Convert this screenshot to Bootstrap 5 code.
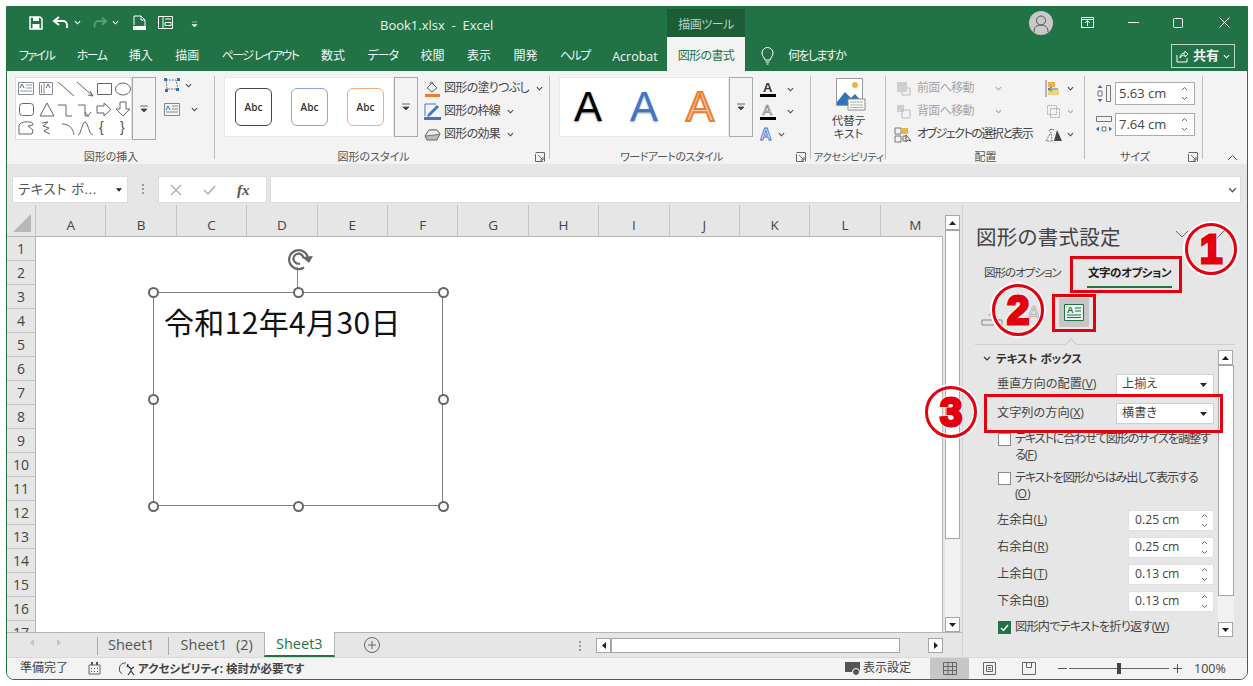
<!DOCTYPE html>
<html lang="ja"><head><meta charset="utf-8"><title>Book1.xlsx - Excel</title>
<link rel="stylesheet" href="https://cdn.jsdelivr.net/npm/bootstrap@5.3.0/dist/css/bootstrap.min.css">
<style>
html,body{background:#fff;margin:0;height:686px;overflow:hidden}
body{font-family:"Open Sans","Noto Sans CJK JP",sans-serif;font-feature-settings:"palt";color:#444;font-size:12px;line-height:1.2}
svg{display:block;flex:none}
.xw{position:relative;margin:6px 0 0 6px;width:1242px;height:674px;border:1px solid #217346;border-radius:0 0 8px 8px;overflow:hidden;background:#e6e6e6}
.tbar{height:31px;background:#217346;color:#fff;position:relative}
.qa{width:670px;padding-left:21px}
.m4x{margin-left:4px}.m11{margin-left:11px}.m12{margin-left:12px}.m14{margin-left:14px}.m18{margin-left:18px}
.ttl{position:absolute;left:373px;top:11px;font-size:13px;color:#eaf2ed;white-space:pre}
.ctx{position:absolute;left:660px;top:2px;width:78px;height:29px;background:#1c5d38;color:#b9d3c5;font-size:12px;text-align:center;line-height:32px;letter-spacing:-.5px}
.wc{position:absolute;left:1022px;top:0;height:31px}
.avatar{width:24px;height:24px;border-radius:50%;background:#c9c9c9;margin-right:28px}
.wgap1{margin-left:34px}.wgap2{margin-left:36px}
.tabs{height:33px;background:#217346;color:#f2f7f4;font-size:12px;position:relative;padding:3px 0 0 12px;gap:22.5px}
.tabs>span{white-space:nowrap}
.tabs>.kn{letter-spacing:-1.6px}
.tabs>.kd{letter-spacing:-1px}
.tabs>.kl{font-size:12.5px}
.tact{position:absolute;left:660px;top:-1px;width:78px;height:34px;background:#f3f3f3;color:#217346;text-align:center;line-height:38px;letter-spacing:-.6px}
.tell{position:absolute;left:754px;top:9px;gap:14px}
.tell span{letter-spacing:-1.6px}
.share{position:absolute;left:1164px;top:6px;width:64px;height:24px;border:1px solid #bcd6c7;font-weight:700;font-size:13px;gap:4px}
.rib{height:93px;background:#f3f3f3;position:relative}
.grp{position:relative;height:93px;border-right:0}
.grp::after{content:"";position:absolute;right:0;top:5px;bottom:5px;width:1px;background:#bdbdbd}
.g1{width:208px}.g2{width:335px}.g3{width:261px}.g4{width:75px}.g5{width:199px}.g6{width:118px}
.gbody{height:79px;padding-top:6px}
.glab{height:14px;text-align:center;font-size:11px;line-height:14px;white-space:nowrap;color:#555;position:relative}
.glab.lau{padding-right:18px}
.gt{letter-spacing:-.5px}
.launch{position:absolute;right:5px;top:2px}
.gal{background:#fff;border:1px solid #e9e9e9;height:60px}
.scr{width:24px;height:60px;border:1px solid #a9a9a9;border-left-color:#a9a9a9;background:#f3f3f3}
.cmds{font-size:12px;white-space:nowrap}
.cmd{height:23px;gap:3px}
.cmd span{letter-spacing:-.7px}
.cobj span{letter-spacing:-1.5px}
.off{color:#a6a6a6}
.abc{width:37px;height:38px;border-radius:6px;border:1.5px solid #444;font-size:10px;font-weight:600;background:#fff;color:#333}
.ab2{border-color:#8aa6d8}.ab3{border-color:#efac80}
.wa{font-family:"Liberation Sans",sans-serif;font-size:42px;line-height:1;width:56px;text-align:center}
.wa1{color:#000;text-shadow:0 1px 2px #888}
.wa2{color:#4472c4;text-shadow:0 1px 2px #9ab}
.wa3{color:#f9c9a8;-webkit-text-stroke:2px #ed7d31}
.sz{width:80px;height:23px;background:#fff;border:1px solid #ababab;font-size:13px;padding:0 6px 0 3px}
.fbar{height:41px;background:#e6e6e6;padding:12px 6px 2px 5px}
.fb{height:27px;background:#fff;border:1px solid #dcdcdc}
.nm{width:116px;font-size:13.5px;letter-spacing:.5px;padding:0 5px;color:#555}
.main{height:452px}
.lft{width:955px}
.top{height:427px}
.grd{width:936px}
.hdr{height:32px;background:#e6e6e6;border-bottom:1px solid #b4b4b4;overflow:hidden}
.crn{width:29px;flex:none;border-right:1px solid #c4c4c4}
.cc{flex:0 0 70.4px;border-right:1px solid #c4c4c4;text-align:center;font-size:13.5px;padding-top:12px;height:31px;color:#444}
.rows{width:29px;flex:none;background:#e6e6e6;border-right:1px solid #b4b4b4;overflow:hidden;height:395px}
.rn{height:24px;border-bottom:1px solid #c4c4c4;text-align:center;font-size:14px;line-height:23px;color:#444}
.cells{position:relative;background:#fff;flex:1;border-right:1px solid #b4b4b4}
.tbx{position:absolute;left:117px;top:55px;width:290px;height:214px;border:1.5px solid #7f7f7f;font-size:30px;padding:7px 0 0 10px;font-family:"Noto Sans CJK JP",sans-serif;font-feature-settings:normal;color:#111;line-height:42px;white-space:nowrap;letter-spacing:.35px}
.hd{position:absolute;width:11px;height:11px;border:2px solid #666;border-radius:50%;background:#fff}
.stem{position:absolute;left:261px;top:30px;width:1px;height:25px;background:#888}
.rot{position:absolute;left:250px;top:11px}
.vsb{width:19px;padding:10px 2px 0 2px;background:#e6e6e6}
.arb{width:15px;height:15px;background:#fff;border:1px solid #a6a6a6}
.th{background:#fff;border:1px solid #a6a6a6}
.vth{height:309px}.vtr{height:78px;background:#f1f1f1}
.stabs{height:25px;background:#e6e6e6;position:relative;border-top:1px solid #b4b4b4;font-size:14.5px}
.navs{width:90px;padding-left:23px;gap:21px;height:19px}
.sep{width:1px;height:18px;background:#aaa;flex:none}
.st{padding:0 13px 0 10px;height:23px;line-height:23px;white-space:nowrap;color:#555}
.st2{padding:0 11px 0 12px;word-spacing:5px}
.sta{background:#fff;color:#217346;border-bottom:2px solid #217346;border-left:1px solid #b4b4b4;border-right:1px solid #b4b4b4;padding:0 10px;width:71px;text-align:center;margin-top:-1px;height:25px}
.plus{margin-left:29px}
.dots{margin-left:199px}
.hs{position:absolute;left:589px;top:5px;width:347px;height:15px;gap:0}
.htr{width:289px;height:15px;background:#fff;border:1px solid #a6a6a6}
.pane{flex:1;background:#e6e6e6;border-left:1px solid #d0d0d0;position:relative;padding-left:12px}
.pchv{left:212px;top:25px}.pclose{left:253px;top:24px}.rcol{left:1220px;top:83px}
.ptl{margin-top:18px;height:28px;font-size:20.5px;line-height:28px;white-space:nowrap;color:#444;letter-spacing:.3px;padding-left:1px}
.pt{height:30px;margin-top:7px;padding-left:9px;font-size:11.5px;white-space:nowrap}
.pt1{width:103px;line-height:29px;letter-spacing:-1px}
.pt2{width:85px;text-align:center;font-weight:700;line-height:29px;border-bottom:2.5px solid #217346;color:#222;margin-left:0;letter-spacing:-.4px}
.pic{height:50px;padding-left:6px;padding-top:10px}
.pico{margin-left:16px;width:30px;height:29px;background:#c6c6c6}
.pdiv{position:relative;height:1px;background:#cdcdcd;width:260px;margin-top:6px}
.pdiv::after{content:"";position:absolute;left:92px;top:-4px;width:8px;height:8px;background:#e6e6e6;border-left:1px solid #cdcdcd;border-top:1px solid #cdcdcd;transform:rotate(45deg)}
.pbd{margin-top:5px}
.plist{width:243px;padding-left:22px;padding-right:4px;font-size:12.2px;color:#444}
.sh{height:17px;margin-left:-14px;gap:5px;font-weight:700;font-size:11.5px;color:#333}
.sel{width:98px;height:21px;background:#fff;border:1px solid #cfcfcf;padding:0 6px 0 5px;font-size:12.2px}
.spn{width:86px;height:21px;background:#fff;border:1px solid #e0e0e0;padding:0 5px 0 6px;font-size:12.2px}
.mt6{margin-top:6px}.mt7{margin-top:7px}.mt8{margin-top:8px}.mt9{margin-top:9px}
.ckb{width:13px;height:13px;background:#fff;border:1px solid #8a8a8a;flex:none;margin:2px 4px 0 1px}
.ckd{background:#217346;border-color:#217346}
.ckt{line-height:15.5px;letter-spacing:-1.2px;white-space:nowrap}
.ckt u{letter-spacing:0}
.ck3{letter-spacing:-.8px}
u{text-decoration-thickness:1px}
.psb{width:16px}
.ptv{height:231px}.ptr{height:26px;background:#f1f1f1}
.stt{height:22px;background:#f3f3f3;border-top:1px solid #dadada;font-size:12px;position:relative;color:#444}
.stt>div{position:absolute;top:0;height:21px}
.acc{font-weight:700;font-size:11.5px;gap:2px}
.vb{left:923px;width:39px;background:#c6c6c6}
.rbox{position:absolute;border:3px solid #e3000f;pointer-events:none}
.ring{position:absolute;width:52px;height:52px;border:3px solid #e3000f;border-radius:50%;box-shadow:0 0 0 2px #fff,inset 0 0 0 1px rgba(255,255,255,.8);font-family:"Liberation Sans",sans-serif;font-weight:700;font-size:40px;color:#e3000f;-webkit-text-stroke:3px #e3000f;text-shadow:0 0 4px #fff,0 0 4px #fff,0 0 4px #fff;text-align:center;line-height:46px;font-feature-settings:normal}
</style></head><body>
<svg width="0" height="0" class="position-absolute"><defs>
<symbol id="cv" viewBox="0 0 8 5"><path d="M1 1l3 3 3-3" fill="none" stroke="currentColor" stroke-width="1.2"/></symbol>
<symbol id="la" viewBox="0 0 10 10"><path d="M.5.5h9v9M.5 2v7.5H8M3 3l5 5M8 5v3H5" fill="none" stroke="#666"/></symbol>
<symbol id="more" viewBox="0 0 10 8"><path d="M1 1h8M2 4l3 3 3-3z" fill="#444" stroke="#444" stroke-width=".8"/></symbol>
<symbol id="up" viewBox="0 0 7 4"><path d="M0 4l3.5-4L7 4z" fill="#222"/></symbol>
<symbol id="dn" viewBox="0 0 7 4"><path d="M0 0l3.5 4L7 0z" fill="#222"/></symbol>
<symbol id="spin" viewBox="0 0 7 15"><path d="M1 4l2.500-2.500L6 4M1 11l2.500 2.500L6 11" fill="none" stroke="#666"/></symbol>
</defs></svg>
<div class="xw d-flex flex-column">
<div class="tbar d-flex align-items-center flex-none">
 <div class="qa d-flex align-items-center">
  <svg width="16" height="16" viewBox="0 0 16 16"><path d="M2 2h10l2 2v10H2z" fill="none" stroke="#fff" stroke-width="1.500"/><path d="M5 2h6v4H5zM4.500 9h7v5h-7z" fill="#fff"/></svg>
  <svg class="ms-2" width="18" height="14" viewBox="0 0 18 14"><path d="M7 1L2 5l5 4M2 5h9a4 4 0 0 1 4 4v3" fill="none" stroke="#fff" stroke-width="2"/></svg>
  <svg class="ms-1 text-white" width="7" height="5"><use href="#cv"/></svg>
  <svg class="m11" width="16" height="14" viewBox="0 0 18 14"><path d="M11 1l5 4-5 4M16 5H7a4 4 0 0 0-4 4v3" fill="none" stroke="#5f9c7b" stroke-width="2"/></svg>
  <svg class="ms-1 qadim" width="7" height="5"><use href="#cv" stroke="#5f9c7b"/></svg>
  <svg class="m14" width="13" height="16" viewBox="0 0 13 16"><path d="M1 1h7l4 4v6M1 1v9M8 1v4h4" fill="none" stroke="#fff"/><path d="M0 11h13v4H0z" fill="#fff"/></svg>
  <svg class="m12" width="15" height="13" viewBox="0 0 15 13"><path d="M.5.5h14v12H.5zM5 .5v12M7 3h6M7 6.500h6v3H7z" fill="none" stroke="#fff"/></svg>
  <svg class="m18 mt-1" width="7" height="7" viewBox="0 0 7 7"><path d="M1 1h5M1 3.500l2.500 2.500L6 3.500z" fill="#fff" stroke="#fff" stroke-width=".5"/></svg>
 </div>
 <span class="ttl">Book1.xlsx  -  Excel</span>
 <div class="ctx">描画ツール</div>
 <div class="wc d-flex align-items-center">
  <div class="avatar d-flex align-items-center justify-content-center"><svg width="18" height="18" viewBox="0 0 18 18"><circle cx="9" cy="6.500" r="4.500" fill="none" stroke="#555"/><path d="M2 18c0-5 3-7 7-7s7 2 7 7" fill="none" stroke="#555"/></svg></div>
  <svg width="13" height="11" viewBox="0 0 13 11"><path d="M.5.5h12v10H.5zM.5 2.500h12M6.500 9V4M4 6l2.500-2.500L9 6" fill="none" stroke="#fff"/></svg>
  <svg class="wgap1" width="11" height="1" viewBox="0 0 11 1"><path d="M0 .5h11" stroke="#fff"/></svg>
  <svg class="wgap1" width="10" height="10" viewBox="0 0 10 10"><rect x=".5" y=".5" width="9" height="9" rx="1" fill="none" stroke="#fff"/></svg>
  <svg class="wgap2" width="11" height="11" viewBox="0 0 11 11"><path d="M.5.500l10 10M10.500.500l-10 10" stroke="#fff"/></svg>
 </div>
</div>
<div class="tabs d-flex align-items-center">
 <span class="kn">ファイル</span><span class="kn">ホーム</span><span>挿入</span><span>描画</span><span class="kn">ページ レイアウト</span><span>数式</span><span class="kd">データ</span><span>校閲</span><span>表示</span><span>開発</span><span class="kn">ヘルプ</span><span class="kl">Acrobat</span>
 <div class="tact">図形の書式</div>
 <div class="tell d-flex align-items-center"><svg width="13" height="18" viewBox="0 0 13 18"><path d="M4 13C3 10 1 9 1 6a5.500 5.500 0 0 1 11 0c0 3-2 4-3 7zM4.500 15h4M5.500 17h2" fill="none" stroke="#fff"/></svg><span>何をしますか</span></div>
 <div class="share d-flex align-items-center justify-content-center"><svg width="13" height="13" viewBox="0 0 13 13"><path d="M1 5v7h10V8M4 8c0-3 2-5 5-5V1l3 3-3 3V5C7 5 5 6 4 8z" fill="none" stroke="#fff"/></svg><span>共有</span><svg class="text-white" width="7" height="5"><use href="#cv"/></svg></div>
</div>
<div class="rib d-flex">
 <div class="grp g1"><div class="gbody d-flex ps-2">
   <div class="gal ms-0" style="width:117px;height:63px;border-color:#ddd"><svg width="115" height="61" viewBox="0 0 115 61" fill="none" stroke="#666"><path d="M2.500 4.500h15v12h-15z" stroke="#8a8a8a"/><path d="M10 7h6M10 10h6M4 13h12" stroke="#999"/><path d="M4 10l2-4 2 4" stroke="#2e75b6"/><path d="M23.500 4.500h13v12h-13zM28 4.500v12M25.500 7v8" stroke="#8a8a8a"/><path d="M30 10l2-4 2 4" stroke="#2e75b6"/><path d="M42 4l16 14M61 4l16 14M74 13l3 5-5-1M81.500 5.500h14v11h-14z"/><ellipse cx="107" cy="11" rx="7.500" ry="6"/><rect x="3.500" y="25.500" width="14" height="12" rx="3"/><path d="M24 38l7-13 7 13zM42 27h8v11h6M62 27h7v11h4M69 34l3 4 3-4M81 28h7v-3l7 6.500-7 6.500v-3h-7zM104 24h6v7h4l-7 7-7-7h4zM3 56V47c3-4 8-3 11-3 2 0 3 1 3 3l-5 1 5 4-1 4zM26 45l6-1-5 4 6 2-5 3 6 3M46 46c7 0 11 4 12 11M62 57c3 0 4-13 7-13s4 13 8 13"/><text x="83" y="54" font-size="14" fill="#555" stroke="none" font-family="Liberation Sans">{</text><text x="104" y="54" font-size="14" fill="#555" stroke="none" font-family="Liberation Sans">}</text></svg></div>
   <div class="scr d-flex align-items-center justify-content-center" style="height:63px"><svg width="10" height="8"><use href="#more"/></svg></div>
   <div class="ms-2">
     <div class="d-flex align-items-center" style="height:16px;gap:5px"><svg width="16" height="14" viewBox="0 0 16 14"><path d="M2 2l10 0 2 9H3z" fill="none" stroke="#777" stroke-dasharray="2 1"/><path d="M0 0h3v3H0zM13 0h3v3h-3zM1 11h3v3H1zM12 10h3v3h-3z" fill="#2e75b6"/></svg><svg width="7" height="5"><use href="#cv"/></svg></div>
     <div class="d-flex align-items-center" style="height:16px;margin-top:8px;gap:11px"><svg width="16" height="13" viewBox="0 0 16 13"><path d="M.500.500h15v12H.500zM8 3h6M8 6h6M2 9h12" fill="none" stroke="#888"/><path d="M2 7l2-4 2 4" fill="none" stroke="#2e75b6"/></svg><svg width="7" height="5"><use href="#cv"/></svg></div>
   </div>
  </div><div class="glab">図形の挿入</div></div>
 <div class="grp g2"><div class="gbody d-flex" style="padding-left:9px">
   <div class="gal d-flex align-items-center" style="width:170px;padding:0 0 0 10px;gap:19px"><div class="abc d-flex align-items-center justify-content-center">Abc</div><div class="abc ab2 d-flex align-items-center justify-content-center">Abc</div><div class="abc ab3 d-flex align-items-center justify-content-center">Abc</div></div>
   <div class="scr d-flex align-items-center justify-content-center"><svg width="10" height="8"><use href="#more"/></svg></div>
   <div class="cmds" style="margin-left:6px">
    <div class="cmd d-flex align-items-center"><svg width="17" height="17" viewBox="0 0 17 17"><path d="M1 14h15v3H1z" fill="#ed7d31"/><path d="M3 8l5-5 5 5-5 4zM6 4c0-3 3-3 3 0" fill="#eee" stroke="#666"/></svg><span>図形の塗りつぶし</span><svg class="ms-1" width="7" height="5"><use href="#cv"/></svg></div>
    <div class="cmd d-flex align-items-center"><svg width="17" height="17" viewBox="0 0 17 17"><path d="M0 14h17v3H0z" fill="#4472c4"/><path d="M1 1v12M1 1h11" stroke="#4472c4" fill="none"/><path d="M4 11l9-9 2 2-9 9-3 1z" fill="#4472c4"/></svg><span>図形の枠線</span><svg class="ms-1" width="7" height="5"><use href="#cv"/></svg></div>
    <div class="cmd d-flex align-items-center"><svg width="17" height="15" viewBox="0 0 17 15"><path d="M5 3h8l3 4-3 6H3L1 9z" fill="#bbb" stroke="#666"/><path d="M1 9l4-6h8l3 4-5 1z" fill="#eee" stroke="#777"/></svg><span>図形の効果</span><svg class="ms-1" width="7" height="5"><use href="#cv"/></svg></div>
   </div></div><div class="glab lau">図形のスタイル<svg class="launch" width="10" height="10"><use href="#la"/></svg></div></div>
 <div class="grp g3"><div class="gbody d-flex" style="padding-left:9px">
   <div class="gal d-flex align-items-center justify-content-center" style="width:170px"><span class="wa wa1">A</span><span class="wa wa2">A</span><span class="wa wa3">A</span></div>
   <div class="scr d-flex align-items-center justify-content-center"><svg width="10" height="8"><use href="#more"/></svg></div>
   <div style="margin-left:7px;padding-top:1px">
    <div class="d-flex align-items-center" style="height:22px;gap:11px"><svg width="16" height="18" viewBox="0 0 16 18"><text x="3" y="12" font-size="13" font-weight="700" fill="#333" font-family="Liberation Sans">A</text><path d="M0 14h16v3H0z" fill="#000"/></svg><svg width="7" height="5"><use href="#cv"/></svg></div>
    <div class="d-flex align-items-center" style="height:23px;gap:11px"><svg width="16" height="18" viewBox="0 0 16 18"><text x="2.500" y="12" font-size="14" fill="#fff" stroke="#666" stroke-width=".6" font-family="Liberation Sans">A</text><path d="M0 14h16v3H0z" fill="#000"/></svg><svg width="7" height="5"><use href="#cv"/></svg></div>
    <div class="d-flex align-items-center" style="height:22px;gap:4px"><svg width="14" height="15" viewBox="0 0 14 15"><text x="0" y="13" font-size="16" font-weight="700" fill="#d6e4f7" stroke="#4472c4" stroke-width=".8" font-family="Liberation Sans">A</text></svg><svg width="7" height="5"><use href="#cv"/></svg></div>
   </div></div><div class="glab lau"><span class="gt">ワードアートのスタイル</span><svg class="launch" width="10" height="10"><use href="#la"/></svg></div></div>
 <div class="grp g4"><div class="gbody text-center" style="padding-top:7px">
   <svg class="mx-auto" width="34" height="33" viewBox="0 0 34 33"><path d="M4.500.500h26v27h-26z" fill="#fff" stroke="#999"/><circle cx="23" cy="7" r="3" fill="#f0b34a"/><path d="M5 24l8-10 6 6 4-4 7 8v3H5z" fill="#2e75b6"/><path d="M16 21h17v11H16z" fill="#fff" stroke="#888"/><path d="M18 24h13M18 27h13M18 29.500h13" stroke="#aaa"/></svg>
   <div style="margin-top:3px;line-height:13px;font-size:11.500px">代替テ<br>キスト</div></div><div class="glab gt" style="font-size:10.500px">アクセシビリティ</div></div>
 <div class="grp g5"><div class="gbody d-flex">
   <div class="cmds ps-2" style="padding-top:0;width:156px">
    <div class="cmd d-flex align-items-center off" style="gap:5px"><svg width="18" height="16" viewBox="0 0 18 16"><path d="M3 1h10v10H3z" fill="#cfcfcf"/><path d="M13 7h3v7H8v-3" fill="none" stroke="#bbb"/></svg><span>前面へ移動</span><svg class="ms-3" width="7" height="5"><use href="#cv"/></svg></div>
    <div class="cmd d-flex align-items-center off" style="gap:5px"><svg width="18" height="16" viewBox="0 0 18 16"><path d="M3 1h7v7H3z" fill="#cfcfcf"/><path d="M8 6h8v8H8z" fill="none" stroke="#bbb"/></svg><span>背面へ移動</span><svg class="ms-3" width="7" height="5"><use href="#cv"/></svg></div>
    <div class="cmd cobj d-flex align-items-center" style="gap:5px"><svg width="18" height="16" viewBox="0 0 18 16"><path d="M1 1h6v6H1zM1 9h6v6H1zM9 9h4v5H9z" fill="none" stroke="#777"/><path d="M8 1h6v6H8z" fill="#f0b34a"/><path d="M12 8v7l2-2 3 1z" fill="#fff" stroke="#555"/></svg><span>オブジェクトの選択と表示</span></div>
   </div>
   <div style="margin-left:3px">
    <div class="d-flex align-items-center" style="height:23px;gap:5px"><svg width="17" height="17" viewBox="0 0 17 17"><path d="M1 0v17" stroke="#777"/><path d="M3 2h7v5H3z" fill="#f0b34a"/><path d="M3 10h11v5H3z" fill="#f0d080"/><path d="M7 7l-4 2 4 2M3 9h10" stroke="#2e75b6" fill="none"/></svg><svg width="7" height="5"><use href="#cv"/></svg></div>
    <div class="d-flex align-items-center" style="height:23px;gap:5px;color:#aaa"><svg width="17" height="17" viewBox="0 0 17 17"><path d="M2.500 2.500h9v9h-9zM5.500 5.500h9v9h-9z" fill="none" stroke="#aaa" stroke-dasharray="2 1"/></svg><svg width="7" height="5"><use href="#cv"/></svg></div>
    <div class="d-flex align-items-center" style="height:23px;gap:5px"><svg width="17" height="15" viewBox="0 0 17 15"><path d="M9 14h8L12 3z" fill="#444"/><path d="M7 14H1l5-9z" fill="none" stroke="#777" stroke-dasharray="2 1"/><path d="M4 4c1-2 3-2 5-1" fill="none" stroke="#2e75b6"/></svg><svg width="7" height="5"><use href="#cv"/></svg></div>
   </div></div><div class="glab">配置</div></div>
 <div class="grp g6"><div class="gbody" style="padding-left:11px;padding-top:11px">
   <div class="d-flex align-items-center" style="gap:3px"><svg width="16" height="19" viewBox="0 0 16 19"><path d="M10.500 1.500h4v16h-4z" fill="none" stroke="#777"/><path d="M4 1l2.500 3h-5zM4 18l2.500-3h-5z" fill="#2e75b6"/><path d="M2 7h4v5H2z" fill="none" stroke="#777"/></svg><div class="sz d-flex align-items-center justify-content-between"><span>5.63 cm</span><svg width="7" height="15"><use href="#spin"/></svg></div></div>
   <div class="d-flex align-items-center" style="gap:3px;margin-top:8px"><svg width="16" height="19" viewBox="0 0 16 19"><path d="M.500 1.500h15v5h-15z" fill="none" stroke="#777"/><path d="M0 14l3-2.500v5zM16 14l-3-2.500v5z" fill="#2e75b6"/><path d="M6 12h4v4H6z" fill="none" stroke="#777"/></svg><div class="sz d-flex align-items-center justify-content-between"><span>7.64 cm</span><svg width="7" height="15"><use href="#spin"/></svg></div></div>
   </div><div class="glab lau">サイズ<svg class="launch" width="10" height="10"><use href="#la"/></svg></div></div>
 <svg class="position-absolute rcol" width="11" height="7" viewBox="0 0 11 7"><path d="M1 6l4.500-4.500L10 6" fill="none" stroke="#555"/></svg>
</div>
<div class="fbar d-flex">
 <div class="fb nm d-flex align-items-center justify-content-between"><span>テキスト ボ...</span><svg width="6" height="4"><use href="#dn"/></svg></div>
 <div class="d-flex justify-content-center align-items-center" style="width:30px"><svg width="2" height="11"><path d="M1 0v2M1 4v2M1 8v2" stroke="#999" stroke-width="2"/></svg></div>
 <div class="fb d-flex align-items-center" style="width:109px;padding-left:11px;gap:21px"><svg width="12" height="12" viewBox="0 0 12 12"><path d="M1 1l10 10M11 1L1 11" stroke="#aaa" stroke-width="1.300"/></svg><svg width="13" height="10" viewBox="0 0 13 10"><path d="M1 5l4 4 7-8" fill="none" stroke="#aaa" stroke-width="1.300"/></svg><i style="font-family:'Liberation Serif',serif;font-size:15px;font-weight:700;color:#555">fx</i></div>
 <div class="fb flex-fill d-flex align-items-center justify-content-end" style="margin-left:3px;padding-right:3px"><svg width="9" height="6" style="color:#555"><use href="#cv"/></svg></div>
</div>
<div class="main d-flex">
 <div class="lft d-flex flex-column">
  <div class="top d-flex">
   <div class="grd d-flex flex-column">
    <div class="hdr d-flex"><div class="crn d-flex align-items-end justify-content-end pe-1 pb-1"><svg width="18" height="18"><path d="M18 0v18H0z" fill="#b8b8b8"/></svg></div><div class="cc">A</div><div class="cc">B</div><div class="cc">C</div><div class="cc">D</div><div class="cc">E</div><div class="cc">F</div><div class="cc">G</div><div class="cc">H</div><div class="cc">I</div><div class="cc">J</div><div class="cc">K</div><div class="cc">L</div><div class="cc">M</div></div>
    <div class="d-flex flex-fill" style="min-height:0">
     <div class="rows"><div class="rn">1</div><div class="rn">2</div><div class="rn">3</div><div class="rn">4</div><div class="rn">5</div><div class="rn">6</div><div class="rn">7</div><div class="rn">8</div><div class="rn">9</div><div class="rn">10</div><div class="rn">11</div><div class="rn">12</div><div class="rn">13</div><div class="rn">14</div><div class="rn">15</div><div class="rn">16</div><div class="rn">17</div></div>
     <div class="cells">
      <div class="stem"></div>
      <svg class="rot" width="28" height="24" viewBox="0 0 28 24" fill="none" stroke="#666" stroke-width="2.200"><path d="M18 19.500a9.500 9.500 0 1 1 4-9.500"/><path d="M14 15.500a5 5 0 1 1 3.500-5"/><path d="M16 9l7 6 4-7z" fill="#666" stroke="none"/></svg>
      <div class="tbx">令和12年4月30日</div>
      <div class="hd" style="left:112px;top:50px"></div><div class="hd" style="left:257px;top:50px"></div><div class="hd" style="left:402px;top:50px"></div>
      <div class="hd" style="left:112px;top:157px"></div><div class="hd" style="left:402px;top:157px"></div>
      <div class="hd" style="left:112px;top:264px"></div><div class="hd" style="left:257px;top:264px"></div><div class="hd" style="left:402px;top:264px"></div>
     </div>
    </div>
   </div>
   <div class="vsb">
    <div class="arb d-flex align-items-center justify-content-center"><svg width="7" height="4"><use href="#up"/></svg></div>
    <div class="th vth"></div><div class="vtr"></div>
    <div class="arb d-flex align-items-center justify-content-center"><svg width="7" height="4"><use href="#dn"/></svg></div>
   </div>
  </div>
  <div class="stabs d-flex">
   <div class="navs d-flex align-items-center"><svg width="5" height="7"><path d="M4 0v7L0 3.500z" fill="#c4c4c4"/></svg><svg width="5" height="7"><path d="M1 0v7l4-3.500z" fill="#c4c4c4"/></svg></div>
   <div class="sep mt-1"></div><div class="st">Sheet1</div><div class="sep mt-1"></div><div class="st st2">Sheet1 (2)</div>
   <div class="st sta">Sheet3</div>
   <svg class="plus mt-1" width="16" height="16" viewBox="0 0 16 16" fill="none" stroke="#666"><circle cx="8" cy="8" r="7.500"/><path d="M8 4v8M4 8h8"/></svg>
   <svg class="dots mt-2" width="2" height="10"><path d="M1 0v2M1 4v2M1 8v2" stroke="#999" stroke-width="2"/></svg>
   <div class="hs d-flex"><div class="arb d-flex align-items-center justify-content-center"><svg width="4" height="7"><path d="M4 0v7L0 3.500z" fill="#222"/></svg></div><div class="htr"></div><div class="flex-fill"></div><div class="arb d-flex align-items-center justify-content-center"><svg width="4" height="7"><path d="M0 0v7l4-3.500z" fill="#222"/></svg></div></div>
  </div>
 </div>
 <div class="pane">
  <div class="ptl">図形の書式設定</div>
  <svg class="position-absolute pchv" width="14" height="9" viewBox="0 0 14 9"><path d="M1 1l6 6 6-6" fill="none" stroke="#666"/></svg>
  <svg class="position-absolute pclose" width="10" height="10" viewBox="0 0 10 10"><path d="M1 9l8-8" stroke="#666"/></svg>
  <div class="pt d-flex"><div class="pt1">図形のオプション</div><div class="pt2">文字のオプション</div></div>
  <div class="pic d-flex">
   <svg width="62" height="28" viewBox="0 0 62 28" fill="none" stroke="#888"><path d="M1 22h20v5H1zM8 18L17 2M14 20l-4-1" /><text x="46" y="22" font-size="20" fill="#ddd" stroke="#999" stroke-width=".5" font-family="Liberation Sans">A</text></svg>
   <div class="pico d-flex align-items-center justify-content-center"><svg width="20" height="17" viewBox="0 0 20 17"><path d="M.500.500h19v16H.500z" fill="#e9f2ec" stroke="#217346"/><path d="M11 4h6M11 7h6M3 11h14M3 13.500h14" stroke="#217346"/><text x="3" y="9" font-size="9" font-weight="700" fill="#217346" font-family="Liberation Sans">A</text></svg></div>
  </div>
  <div class="pdiv"></div>
  <div class="pbd d-flex">
   <div class="plist">
    <div class="sh d-flex align-items-center"><svg width="8" height="5"><use href="#cv"/></svg><span>テキスト ボックス</span></div>
    <div class="d-flex justify-content-between align-items-center mt7"><span>垂直方向の配置(<u>V</u>)</span><div class="sel d-flex justify-content-between align-items-center"><span>上揃え</span><svg width="7" height="4"><use href="#dn"/></svg></div></div>
    <div class="d-flex justify-content-between align-items-center mt8"><span>文字列の方向(<u>X</u>)</span><div class="sel d-flex justify-content-between align-items-center"><span>横書き</span><svg width="7" height="4"><use href="#dn"/></svg></div></div>
    <div class="d-flex mt7"><div class="ckb"></div><div class="ckt">テキストに合わせて図形のサイズを調整す<br>る(<u>F</u>)</div></div>
    <div class="d-flex mt8"><div class="ckb"></div><div class="ckt">テキストを図形からはみ出して表示する<br>(<u>O</u>)</div></div>
    <div class="d-flex justify-content-between align-items-center mt9"><span>左余白(<u>L</u>)</span><div class="spn d-flex justify-content-between align-items-center"><span>0.25 cm</span><svg width="7" height="15"><use href="#spin"/></svg></div></div>
    <div class="d-flex justify-content-between align-items-center mt6"><span>右余白(<u>R</u>)</span><div class="spn d-flex justify-content-between align-items-center"><span>0.25 cm</span><svg width="7" height="15"><use href="#spin"/></svg></div></div>
    <div class="d-flex justify-content-between align-items-center mt6"><span>上余白(<u>T</u>)</span><div class="spn d-flex justify-content-between align-items-center"><span>0.13 cm</span><svg width="7" height="15"><use href="#spin"/></svg></div></div>
    <div class="d-flex justify-content-between align-items-center mt6"><span>下余白(<u>B</u>)</span><div class="spn d-flex justify-content-between align-items-center"><span>0.13 cm</span><svg width="7" height="15"><use href="#spin"/></svg></div></div>
    <div class="d-flex mt7"><div class="ckb ckd d-flex align-items-center justify-content-center"><svg width="9" height="8" viewBox="0 0 9 8"><path d="M1 4l2.500 2.500L8 1" fill="none" stroke="#fff" stroke-width="1.500"/></svg></div><div class="ckt ck3">図形内でテキストを折り返す(<u>W</u>)</div></div>
   </div>
   <div class="psb">
    <div class="arb d-flex align-items-center justify-content-center"><svg width="7" height="4"><use href="#up"/></svg></div>
    <div class="th ptv"></div><div class="ptr"></div>
    <div class="arb d-flex align-items-center justify-content-center"><svg width="7" height="4"><use href="#dn"/></svg></div>
   </div>
  </div>
 </div>
</div>
<div class="stt">
 <div class="d-flex align-items-center" style="left:13px">準備完了</div>
 <div class="d-flex align-items-center" style="left:81px"><svg width="13" height="13" viewBox="0 0 13 13"><path d="M1 3h11v9H1z" fill="none" stroke="#666"/><path d="M3 0h2v3H3zM8 0h2v3H8zM3 6h1v1H3zM6 6h1v1H6zM9 6h1v1H9zM3 9h1v1H3zM6 9h1v1H6zM9 9h1v1H9z" fill="#555"/></svg></div>
 <div class="acc d-flex align-items-center" style="left:111px"><svg width="18" height="16" viewBox="0 0 18 16" fill="none" stroke="#555"><path d="M4 13A6 6 0 0 1 8 2"/><path d="M10 5l3 3 3-2M13 8v2l-3 4M13 10l3 4M10 3l-1 3" stroke="#333" stroke-width="1.200"/></svg><span>アクセシビリティ: 検討が必要です</span></div>
 <div class="d-flex align-items-center" style="left:838px;gap:2px"><svg width="16" height="14" viewBox="0 0 16 14"><path d="M0 0h15v10H0z" fill="#555"/><circle cx="11" cy="10" r="3.500" fill="#555" stroke="#fff"/></svg><span>表示設定</span></div>
 <div class="vb d-flex align-items-center justify-content-center"><svg width="14" height="13" viewBox="0 0 14 13"><path d="M.500.500h13v12H.500zM.500 4.500h13M.500 8.500h13M5 .5v12M9.500.5v12" fill="none" stroke="#666"/></svg></div>
 <div class="d-flex align-items-center" style="left:976px"><svg width="13" height="13" viewBox="0 0 13 13"><path d="M.500.500h12v12H.500zM3.500 3.500h6v6h-6zM5 5.500h3M5 7.500h3" fill="none" stroke="#666"/></svg></div>
 <div class="d-flex align-items-center" style="left:1015px"><svg width="14" height="13" viewBox="0 0 14 13"><path d="M.500.500h13v12H.500zM4.500.500v5h5v-5" fill="none" stroke="#666"/></svg></div>
 <div class="d-flex align-items-center" style="left:1051px;gap:2px"><svg width="9" height="1"><path d="M0 .5h9" stroke="#555"/></svg><svg width="102" height="13" viewBox="0 0 102 13"><path d="M0 6.500h100" stroke="#666"/><path d="M48 1h4v11h-4z" fill="#444"/></svg></div>
 <div class="d-flex align-items-center" style="left:1166px"><svg width="9" height="9"><path d="M0 4.500h9M4.500 0v9" stroke="#555"/></svg></div>
 <div class="d-flex align-items-center" style="left:1187px;font-size:12.500px">100%</div>
</div>
<div class="rbox" style="left:1063px;top:249px;width:112px;height:37px"></div>
<div class="rbox" style="left:1045px;top:287px;width:44px;height:38px"></div>
<div class="rbox" style="left:977px;top:387px;width:239px;height:39px"></div>
<div class="ring" style="left:1178px;top:216px">1</div>
<div class="ring" style="left:985px;top:277px">2</div>
<div class="ring" style="left:918px;top:379px">3</div>
</div>
</body></html>
